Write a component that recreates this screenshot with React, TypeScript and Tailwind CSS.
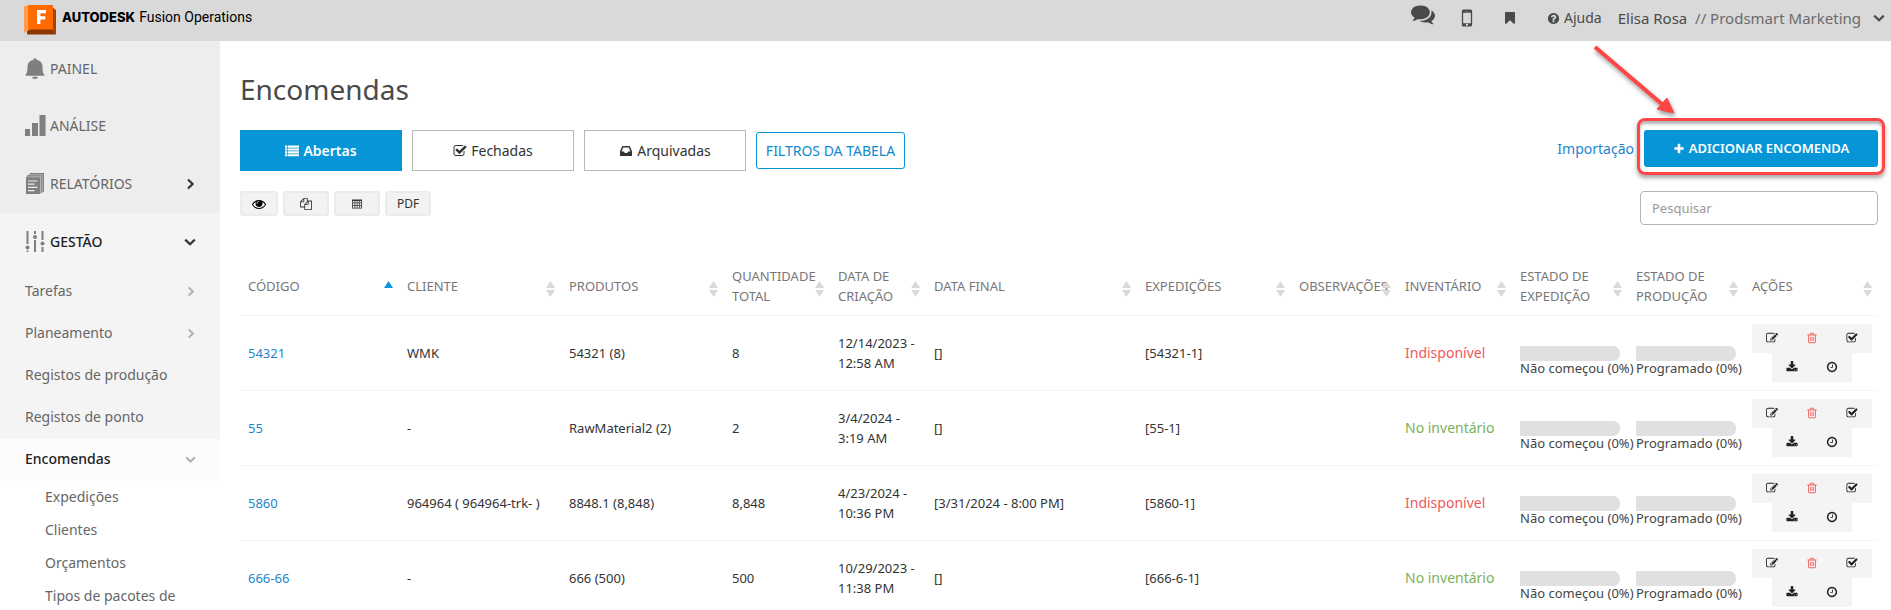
import type { ReactNode } from "react";

const PATHS = {
  edit: "M888 1184l116-116-152-152-116 116v56h96v96h56zm440-720q-16-16-33 1l-350 350q-17 17-1 33t33-1l350-350q17-17 1-33zm80 594v190q0 119-84.5 203.5t-203.5 84.5h-832q-119 0-203.5-84.5t-84.5-203.5v-832q0-119 84.5-203.5t203.5-84.5h832q63 0 117 25 15 7 18 23 3 17-9 29l-49 49q-14 14-32 8-23-6-45-6h-832q-66 0-113 47t-47 113v832q0 66 47 113t113 47h832q66 0 113-47t47-113v-126q0-13 9-22l64-64q15-15 35-7t20 29zm-96-738l288 288-672 672h-288v-288zm444 132l-92 92-288-288 92-92q28-28 68-28t68 28l152 152q28 28 28 68t-28 68z",
  trash: "M704 736v576q0 14-9 23t-23 9h-64q-14 0-23-9t-9-23v-576q0-14 9-23t23-9h64q14 0 23 9t9 23zm256 0v576q0 14-9 23t-23 9h-64q-14 0-23-9t-9-23v-576q0-14 9-23t23-9h64q14 0 23 9t9 23zm256 0v576q0 14-9 23t-23 9h-64q-14 0-23-9t-9-23v-576q0-14 9-23t23-9h64q14 0 23 9t9 23zm128 724v-948h-896v948q0 22 7 40.5t14.5 27 10.5 8.5h832q3 0 10.5-8.5t14.5-27 7-40.5zm-672-1076h448l-48-117q-7-9-17-11h-317q-10 2-17 11zm928 32v64q0 14-9 23t-23 9h-96v948q0 83-47 143.5t-113 60.5h-832q-66 0-113-58.5t-47-141.5v-952h-96q-14 0-23-9t-9-23v-64q0-14 9-23t23-9h309l70-167q15-37 54-63t79-26h320q40 0 79 26t54 63l70 167h309q14 0 23 9t9 23z",
  check: "M1472 930v318q0 119-84.5 203.5t-203.5 84.5h-832q-119 0-203.5-84.5t-84.5-203.5v-832q0-119 84.5-203.5t203.5-84.5h832q63 0 117 25 15 7 18 23 3 17-9 29l-49 49q-10 10-23 10-3 0-9-2-23-6-45-6h-832q-66 0-113 47t-47 113v832q0 66 47 113t113 47h832q66 0 113-47t47-113v-254q0-13 9-22l64-64q10-10 23-10 6 0 12 3 20 8 20 29zm231-489l-814 814q-24 24-57 24t-57-24l-430-430q-24-24-24-57t24-57l110-110q24-24 57-24t57 24l263 263 647-647q24-24 57-24t57 24l110 110q24 24 24 57t-24 57z",
  download: "M1344 1344q0-26-19-45t-45-19-45 19-19 45 19 45 45 19 45-19 19-45zm256 0q0-26-19-45t-45-19-45 19-19 45 19 45 45 19 45-19 19-45zm128-224v320q0 40-28 68t-68 28h-1472q-40 0-68-28t-28-68v-320q0-40 28-68t68-28h465l135 136q58 56 136 56t136-56l136-136h464q40 0 68 28t28 68zm-325-569q17 41-14 70l-448 448q-18 19-45 19t-45-19l-448-448q-31-29-14-70 17-39 59-39h256v-448q0-26 19-45t45-19h256q26 0 45 19t19 45v448h256q42 0 59 39z",
  clock: "M1024 544v448q0 14-9 23t-23 9h-320q-14 0-23-9t-9-23v-64q0-14 9-23t23-9h224v-352q0-14 9-23t23-9h64q14 0 23 9t9 23zm416 352q0-148-73-273t-198-198-273-73-273 73-198 198-73 273 73 273 198 198 273 73 273-73 198-198 73-273zm224 0q0 209-103 385.5t-279.5 279.5-385.5 103-385.5-103-279.5-279.5-103-385.5 103-385.5 279.5-279.5 385.5-103 385.5 103 279.5 279.5 103 385.5z",
  comments: "M1408 768q0 139-94 257t-256.5 186.5-353.5 68.5q-86 0-176-16-124 88-278 128-36 9-86 16h-3q-11 0-20.5-8t-11.5-21q-1-3-1-6.5t.5-6.5 2-6l2.5-5 3.5-5.5 4-5 4.5-5 4-4.5q5-6 23-25t26-29.5 22.5-29 25-38.5 20.5-44q-124-72-195-177t-71-224q0-139 94-257t256.5-186.5 353.5-68.5 353.5 68.5 256.5 186.5 94 257zm384 256q0 120-71 224.5t-195 176.5q10 24 20.5 44t25 38.5 22.5 29 26 29.5 23 25q1 1 4 4.5t4.5 5 4 5 3.5 5.5l2.5 5 2 6 .5 6.5-1 6.5q-3 14-13 22t-22 7q-50-7-86-16-154-40-278-128-90 16-176 16-271 0-472-132 58 4 88 4 161 0 309-45t264-129q125-92 192-212t67-254q0-77-23-152 129 71 204 178t75 230z",
  inbox: "M1151 960h316q-1-3-2.5-8t-2.5-8l-212-496h-708l-212 496q-1 2-2.5 8t-2.5 8h316l95 192h320zm513 30v482q0 26-19 45t-45 19h-1408q-26 0-45-19t-19-45v-482q0-62 25-123l238-552q10-25 36.5-42t52.5-17h832q26 0 52.5 17t36.5 42l238 552q25 61 25 123z",
  eye: "M1664 960q-152-236-381-353 61 104 61 225 0 185-131.5 316.5t-316.5 131.5-316.5-131.5-131.5-316.5q0-121 61-225-229 117-381 353 133 205 333.5 326.5t434.5 121.5 434.5-121.5 333.5-326.5zm-720-384q0-20-14-34t-34-14q-125 0-214.5 89.5t-89.5 214.5q0 20 14 34t34 14 34-14 14-34q0-86 61-147t147-61q20 0 34-14t14-34zm848 384q0 34-20 69-140 230-376.5 368.5t-499.5 138.5-499.5-139-376.5-368q-20-35-20-69t20-69q140-229 376.5-368t499.5-139 499.5 139 376.5 368q20 35 20 69z",
  files: "M1696 384q40 0 68 28t28 68v1216q0 40-28 68t-68 28h-960q-40 0-68-28t-28-68v-288h-544q-40 0-68-28t-28-68v-672q0-40 20-88t48-76l408-408q28-28 76-48t88-20h416q40 0 68 28t28 68v328q68-40 128-40h416zm-544 213l-299 299h299v-299zm-640-384l-299 299h299v-299zm196 647l316-316v-416h-384v416q0 40-28 68t-68 28h-416v640h512v-256q0-40 20-88t48-76zm956 804v-1152h-384v416q0 40-28 68t-68 28h-416v640h896z",
  bookmark: "M1420 128q23 0 44 9 33 13 52.5 41t19.5 62v1289q0 34-19.5 62t-52.5 41q-19 8-44 8-48 0-83-32l-441-424-441 424q-36 33-83 33-23 0-44-9-33-13-52.5-41t-19.5-62v-1289q0-34 19.5-62t52.5-41q21-9 44-9h1048z",
  mobile: "M976 1408q0-33-23.5-56.5t-56.5-23.5-56.5 23.5-23.5 56.5 23.5 56.5 56.5 23.5 56.5-23.5 23.5-56.5zm208-160v-704q0-13-9.5-22.5t-22.5-9.5h-512q-13 0-22.5 9.5t-9.5 22.5v704q0 13 9.5 22.5t22.5 9.5h512q13 0 22.5-9.5t9.5-22.5zm-192-848q0-16-16-16h-160q-16 0-16 16t16 16h160q16 0 16-16zm288-16v1024q0 52-38 90t-90 38h-512q-52 0-90-38t-38-90v-1024q0-52 38-90t90-38h512q52 0 90 38t38 90z",
  question: "M1024 1376v-192q0-14-9-23t-23-9h-192q-14 0-23 9t-9 23v192q0 14 9 23t23 9h192q14 0 23-9t9-23zm256-672q0-88-55.5-163t-138.5-116-170-41q-243 0-371 213-15 24 8 42l132 100q7 6 19 6 16 0 25-12 53-68 86-92 34-24 86-24 48 0 85.5 26t37.5 59q0 38-20 61t-68 45q-63 28-115.5 86.5t-52.5 125.5v36q0 14 9 23t23 9h192q14 0 23-9t9-23q0-19 21.5-49.5t54.5-49.5q32-18 49-28.5t46-35 44.5-48 28-60.5 12.5-81zm384 192q0 209-103 385.5t-279.5 279.5-385.5 103-385.5-103-279.5-279.5-103-385.5 103-385.5 279.5-279.5 385.5-103 385.5 103 279.5 279.5 103 385.5z",
  plus: "M1600 736v192q0 40-28 68t-68 28h-416v416q0 40-28 68t-68 28h-192q-40 0-68-28t-28-68v-416h-416q-40 0-68-28t-28-68v-192q0-40 28-68t68-28h416v-416q0-40 28-68t68-28h192q40 0 68 28t28 68v416h416q40 0 68 28t28 68z",
  list: "M0 192h300v280H0zM384 192h1408v280H384zM0 560h300v280H0zM384 560h1408v280H384zM0 928h300v280H0zM384 928h1408v280H384zM0 1296h300v280H0zM384 1296h1408v280H384z",
  table: "M150 224h1500v1344H150zM270 460v230h260V460zM640 460v230h220V460zM960 460v230h220V460zM1290 460v230h240V460zM270 800v240h260V800zM640 800v240h220V800zM960 800v240h220V800zM1290 800v240h240V800zM270 1150v300h260v-300zM640 1150v300h220v-300zM960 1150v300h220v-300zM1290 1150v300h240v-300z",
};

type IconName = keyof typeof PATHS;

function Icon({ name, className }: { name: IconName; className: string }) {
  return (
    <svg viewBox="0 0 1792 1792" aria-hidden="true" className={className} fill="currentColor" fillRule={name === "table" ? "evenodd" : "nonzero"}>
      <path d={PATHS[name]} />
    </svg>
  );
}

function Chevron({ dir, className }: { dir: "right" | "down"; className: string }) {
  return (
    <svg viewBox="0 0 12 12" aria-hidden="true" className={className} fill="none" stroke="currentColor" strokeWidth="2.2">
      <path d={dir === "right" ? "M4 1.5 8.6 6 4 10.5" : "M1.2 3.6 6 8.2l4.8-4.6"} />
    </svg>
  );
}

function Logo() {
  return (
    <svg viewBox="0 0 32 30" aria-hidden="true" className="h-[30px] w-8 shrink-0">
      <path d="M0 1.5 5 0v24.5L0 28z" fill="#ff9a4a" />
      <path d="M3 29.500v-3.300L6 24h22.500L32 29.500z" fill="#8f3500" />
      <path d="M28 2l4 3v24.500L28 25z" fill="#a84300" />
      <rect x="4" width="25" height="24.500" fill="#ff6b00" />
      <path d="M13 5h9v3.200h-5.600v3.100h4.900v3.100h-4.900V19H13z" fill="#fff" />
    </svg>
  );
}

const navIcons: Record<string, ReactNode> = {
  bell: (
    <>
      <path d="M10 0.300c1 0 1.500 .6 1.500 1.500 4 .8 6 3.700 6 7.200 0 4.500 .6 6 1.800 7.500v1.200H.7v-1.200C1.900 15 2.500 13.500 2.500 9c0-3.500 2-6.400 6-7.200 0-.9 .5-1.500 1.500-1.500z" />
      <path d="M7.300 18.800h5.400a2.700 2.200 0 0 1-5.400 0z" />
    </>
  ),
  bars: <path d="M0 14h5v7H0zM7 8h6v13H7zM14.500 0h6v21h-6z" />,
  report: (
    <>
      <path d="M5 0H19v18.500l-4 2.500H1V5l1.500-3H4z" />
      <path d="M4 1.800H17.300V19.500M2.500 3.800H15.500V21" fill="none" stroke="#ededed" strokeWidth="0.500" />
      <path d="M3 8h9.500M3 11.200h6.500M3 14.400h9.500M3 17.600h6.500" fill="none" stroke="#ededed" strokeWidth="1.200" />
    </>
  ),
  sliders: (
    <>
      <path d="M1.500 0h2v13h-2zM1.500 19.500h2V21h-2zM9 0h2v3H9zM9 9h2v12H9zM16.500 0h2v9h-2zM16.500 16h2v5h-2z" />
      <circle cx="2.500" cy="16.500" r="2" />
      <circle cx="10" cy="6" r="2" />
      <circle cx="17.500" cy="12.500" r="2" />
    </>
  ),
};

const mainNav = [
  { icon: "bell", label: "PAINEL", arrow: false },
  { icon: "bars", label: "ANÁLISE", arrow: false },
  { icon: "report", label: "RELATÓRIOS", arrow: true },
];

const subNav = [
  { label: "Tarefas", arrow: true },
  { label: "Planeamento", arrow: true },
  { label: "Registos de produção", arrow: false },
  { label: "Registos de ponto", arrow: false },
];

const orderNav = ["Expedições", "Clientes", "Orçamentos", "Tipos de pacotes de"];

function NavIcon({ name }: { name: string }) {
  return (
    <svg viewBox="0 0 21 21" aria-hidden="true" className="size-[21px] shrink-0 text-[#7f7f7f]" fill="currentColor">
      {navIcons[name]}
    </svg>
  );
}

function Sidebar() {
  return (
    <nav className="w-[220px] shrink-0 bg-white text-sm text-[#666]">
      <div className="bg-[#ededed]">
        {mainNav.map((n) => (
          <a key={n.label} href="#" className="flex h-[58px] items-center gap-1 pr-6 pb-px pl-[25px] first:h-14">
            <NavIcon name={n.icon} />
            <span className="grow">{n.label}</span>
            {n.arrow && <Chevron dir="right" className="size-3 text-[#333]" />}
          </a>
        ))}
      </div>
      <div className="bg-[#f4f4f4]">
        <a href="#" className="flex h-[58px] items-center gap-1 pr-6 pb-px pl-[25px]">
          <NavIcon name="sliders" />
          <span className="grow font-medium text-[#222]">GESTÃO</span>
          <Chevron dir="down" className="size-3 text-[#333]" />
        </a>
        {subNav.map((n) => (
          <a key={n.label} href="#" className="flex h-[42px] items-center pr-6 pb-[2px] pl-[25px]">
            <span className="grow">{n.label}</span>
            {n.arrow && <Chevron dir="right" className="size-[11px] text-[#b0b0b0]" />}
          </a>
        ))}
      </div>
      <a href="#" className="flex h-[42px] items-center bg-[#fcfcfc] pr-6 pb-[2px] pl-[25px]">
        <span className="grow font-medium text-[#222]">Encomendas</span>
        <Chevron dir="down" className="size-[11px] text-[#b0b0b0]" />
      </a>
      {orderNav.map((label) => (
        <a key={label} href="#" className="flex h-[33px] items-center pb-[2px] pl-[45px]">
          {label}
        </a>
      ))}
    </nav>
  );
}

function Header() {
  return (
    <header className="flex h-[41px] shrink-0 items-center bg-[#d9d9d9] pr-[6px] pb-[5px] pl-6 text-[#4a4a4a]">
      <a href="#" className="flex items-center gap-[6px] pt-[3px] text-black">
        <Logo />
        <span className="flex items-baseline gap-1 pb-1">
          <span className="font-[Inter,sans-serif] text-[13px] font-extrabold">AUTODESK</span>
          <span className="font-[Roboto,sans-serif] text-sm">Fusion Operations</span>
        </span>
      </a>
      <div className="ml-auto flex items-center">
        <button type="button" aria-label="Mensagens" className="mr-5 pb-2">
          <Icon name="comments" className="size-6" />
        </button>
        <button type="button" aria-label="Telemóvel" className="mr-6">
          <Icon name="mobile" className="size-6" />
        </button>
        <button type="button" aria-label="Favoritos" className="mr-[30px]">
          <Icon name="bookmark" className="size-[14px]" />
        </button>
        <a href="#" className="mr-4 flex items-center gap-1 text-sm">
          <Icon name="question" className="size-[13px]" />
          Ajuda
        </a>
        <button type="button" className="flex items-center gap-3 text-[15px]">
          <span>
            Elisa Rosa&nbsp; <span className="text-[#6b6b6b]">// Prodsmart Marketing</span>
          </span>
          <Chevron dir="down" className="size-3" />
        </button>
      </div>
    </header>
  );
}

function Toolbar() {
  const tab = "flex h-[41px] w-[162px] items-center justify-center gap-1 border text-sm";
  const tool = "flex h-[25px] items-center justify-center rounded-[3px] border-2 border-[#ebebeb] bg-[#f2f2f2] text-[#333]";
  return (
    <>
      <div className="flex items-start">
        <div className="flex gap-[10px] text-[#333]">
          <button type="button" className={`${tab} border-[#0696d7] bg-[#0696d7] font-semibold text-white`}>
            <Icon name="list" className="size-[14px]" />
            Abertas
          </button>
          <button type="button" className={`${tab} border-[#b9b9b9]`}>
            <Icon name="check" className="size-[14px]" />
            Fechadas
          </button>
          <button type="button" className={`${tab} border-[#b9b9b9]`}>
            <Icon name="inbox" className="size-[14px]" />
            Arquivadas
          </button>
          <button type="button" className="h-[37px] w-[149px] self-center rounded-[3px] border border-[#0696d7] text-sm text-[#0f8ad0]">
            FILTROS DA TABELA
          </button>
        </div>
        <div className="ml-auto flex items-center gap-[10px]">
          <a href="#" className="text-sm text-[#1c86cc]">
            Importação
          </a>
          <div className="relative">
            <button type="button" className="flex h-[37px] w-[234px] items-center justify-center gap-1 rounded-[3px] bg-[#0696d7] text-[13px] font-semibold text-white">
              <Icon name="plus" className="size-3" />
              ADICIONAR ENCOMENDA
            </button>
            <div className="pointer-events-none absolute -inset-x-[7px] -top-3 -bottom-2 rounded-lg border-3 border-[#ff4545] shadow-[0_3px_4px_rgba(0,0,0,0.35),inset_0_3px_3px_rgba(0,0,0,0.3)]" />
            <svg viewBox="0 0 94 76" aria-hidden="true" className="pointer-events-none absolute right-[194px] bottom-[51px] h-[76px] w-[94px] drop-shadow-[1px_3px_2px_rgba(0,0,0,0.4)]">
              <path d="M5 7l68 58" stroke="#ff4545" strokeWidth="4" />
              <path d="M84 73l-17-4 10-11z" fill="#ff4545" stroke="#ff4545" />
            </svg>
          </div>
        </div>
      </div>
      <div className="mt-5 flex items-start">
        <div className="flex gap-[5px]">
          <button type="button" aria-label="Colunas" className={`${tool} w-[38px]`}>
            <Icon name="eye" className="size-[14px] text-black" />
          </button>
          <button type="button" aria-label="Copiar" className={`${tool} w-[46px]`}>
            <Icon name="files" className="size-3" />
          </button>
          <button type="button" aria-label="Exportar tabela" className={`${tool} w-[46px]`}>
            <Icon name="table" className="size-3" />
          </button>
          <button type="button" className={`${tool} w-[46px] text-xs`}>
            PDF
          </button>
        </div>
        <input
          type="search"
          aria-label="Pesquisar"
          placeholder="Pesquisar"
          className="ml-auto h-[34px] w-[238px] rounded-[4px] border border-[#b4b4be] px-[11px] text-[13px] placeholder:text-[#999]"
        />
      </div>
    </>
  );
}

const columns = [
  { title: "CÓDIGO", width: "w-[159px]" },
  { title: "CLIENTE", width: "w-[162px]" },
  { title: "PRODUTOS", width: "w-[163px]" },
  { title: "QUANTIDADE TOTAL", width: "w-[106px]" },
  { title: "DATA DE CRIAÇÃO", width: "w-[96px]" },
  { title: "DATA FINAL", width: "w-[211px]" },
  { title: "EXPEDIÇÕES", width: "w-[154px]" },
  { title: "OBSERVAÇÕES", width: "w-[106px]" },
  { title: "INVENTÁRIO", width: "w-[115px]" },
  { title: "ESTADO DE EXPEDIÇÃO", width: "w-[116px]" },
  { title: "ESTADO DE PRODUÇÃO", width: "w-[116px]" },
  { title: "AÇÕES", width: "w-[134px]" },
];

const orders = [
  { code: "54321", client: "WMK", products: "54321 (8)", qty: "8", day: "12/14/2023 -", time: "12:58 AM", end: "[]", ship: "[54321-1]", stock: false },
  { code: "55", client: "-", products: "RawMaterial2 (2)", qty: "2", day: "3/4/2024 -", time: "3:19 AM", end: "[]", ship: "[55-1]", stock: true },
  { code: "5860", client: "964964 ( 964964-trk- )", products: "8848.1 (8,848)", qty: "8,848", day: "4/23/2024 -", time: "10:36 PM", end: "[3/31/2024 - 8:00 PM]", ship: "[5860-1]", stock: false },
  { code: "666-66", client: "-", products: "666 (500)", qty: "500", day: "10/29/2023 -", time: "11:38 PM", end: "[]", ship: "[666-6-1]", stock: true },
];

function SortMark({ active }: { active: boolean }) {
  return (
    <svg viewBox="0 0 9 16" aria-hidden="true" className="absolute top-6 right-[6px] h-4 w-[9px]">
      <path d="M0 7 4.500 0 9 7z" fill={active ? "#0696e0" : "#d9d9d9"} />
      {!active && <path d="M0 9h9l-4.500 7z" fill="#d9d9d9" />}
    </svg>
  );
}

function Progress({ label }: { label: string }) {
  return (
    <div className="pt-4 leading-[14px] whitespace-nowrap text-[#444]">
      <div className="h-[15px] w-[100px] rounded-r-[7px] bg-[#e0e0e0]" />
      {label}
    </div>
  );
}

function Action({ name, label, danger = false }: { name: IconName; label: string; danger?: boolean }) {
  return (
    <button type="button" aria-label={label} className="flex h-[29px] w-10 items-center justify-center bg-[#f4f4f4]">
      <Icon name={name} className={danger ? "size-3 text-[#f0625a]" : "size-3 text-[#222]"} />
    </button>
  );
}

function Orders() {
  return (
    <table className="mt-8 w-full table-fixed border-collapse text-left text-[13px] leading-5 text-[#333]">
      <colgroup>
        {columns.map((c) => (
          <col key={c.title} className={c.width} />
        ))}
      </colgroup>
      <thead>
        <tr className="h-[58px] border-b border-[#f4f4f4]">
          {columns.map((c, i) => (
            <th key={c.title} scope="col" className="relative pl-2 align-middle font-normal text-[#777]">
              {c.title}
              <SortMark active={i === 0} />
            </th>
          ))}
        </tr>
      </thead>
      <tbody>
        {orders.map((o) => (
          <tr key={o.code} className="h-[75px] border-b border-[#f4f4f4]">
            <td className="pl-2">
              <a href="#" className="text-[#1c86cc]">
                {o.code}
              </a>
            </td>
            <td className="pl-2">{o.client}</td>
            <td className="pl-2">{o.products}</td>
            <td className="pl-2">{o.qty}</td>
            <td className="pl-2 whitespace-nowrap">
              {o.day}
              <br />
              {o.time}
            </td>
            <td className="pl-2">{o.end}</td>
            <td className="pl-2">{o.ship}</td>
            <td className="pl-2" />
            <td className={`pl-2 text-sm whitespace-nowrap ${o.stock ? "text-[#7bb05a]" : "text-[#f0595c]"}`}>
              {o.stock ? "No inventário" : "Indisponível"}
            </td>
            <td className="pl-2">
              <Progress label="Não começou (0%)" />
            </td>
            <td className="pl-2">
              <Progress label="Programado (0%)" />
            </td>
            <td className="pl-2">
              <div className="flex w-[120px] flex-wrap justify-center">
                <Action name="edit" label="Editar" />
                <Action name="trash" label="Eliminar" danger />
                <Action name="check" label="Fechar" />
                <Action name="download" label="Descarregar" />
                <Action name="clock" label="Histórico" />
              </div>
            </td>
          </tr>
        ))}
      </tbody>
    </table>
  );
}

export default function App() {
  return (
    <div className="flex h-screen flex-col overflow-hidden bg-white font-['Noto_Sans',sans-serif]">
      <Header />
      <div className="flex min-h-0 grow">
        <Sidebar />
        <main className="min-w-0 grow pr-[13px] pl-5">
          <h1 className="pt-7 pb-[21px] text-[28px] leading-10 text-[#4a4a4a]">Encomendas</h1>
          <Toolbar />
          <Orders />
        </main>
      </div>
    </div>
  );
}
